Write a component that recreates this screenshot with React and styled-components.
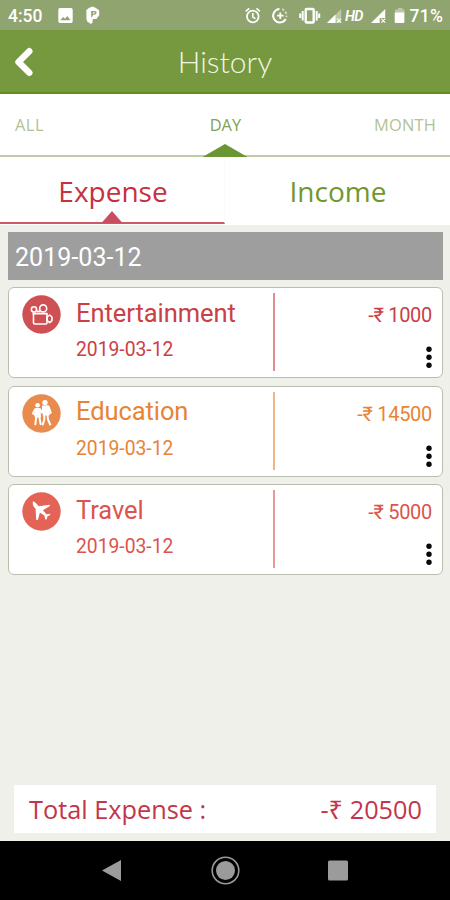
import React from "react";
import styled, { createGlobalStyle } from "styled-components";

const Global = createGlobalStyle`
  * { box-sizing: border-box; }
  body { margin: 0; background: #eff0ea; }
`;

const Screen = styled.div`
  width: 450px;
  height: 900px;
  display: flex;
  flex-direction: column;
  overflow: hidden;
  background: #eff0ea;
  font-family: Roboto, "Noto Sans", sans-serif;
`;

const StatusBar = styled.div`
  height: 30px;
  flex: none;
  display: flex;
  align-items: center;
  justify-content: space-between;
  padding: 2px 7px 0 8px;
  background: #8fa46e;
  color: #fff;
`;

const StatusText = styled.span`
  font-size: 17.5px;
  line-height: 20px;
  font-weight: 500;
  letter-spacing: ${(p) => p.$spacing || "0"};
`;

const StatusGroup = styled.div`
  display: flex;
  align-items: center;
  gap: ${(p) => p.$gap || "0"};
`;

const StatusIcons = styled.svg`
  display: block;
`;

const Header = styled.header`
  height: 64px;
  flex: none;
  display: grid;
  grid-template-columns: 50px 1fr 50px;
  align-items: center;
  background: #76983f;
  border-bottom: 2px solid #628f19;
`;

const BackIcon = styled.svg`
  display: block;
  margin: 1px 0 0 12px;
`;

const Title = styled.h1`
  margin: 0;
  text-align: center;
  color: #f0f6e2;
  font: 300 30px/40px Lato, "Open Sans", sans-serif;
`;

const PeriodTabs = styled.nav`
  height: 63px;
  flex: none;
  display: grid;
  grid-template-columns: 1fr 1fr 1fr;
  background: #fff;
  border-bottom: 2px solid #bfcbab;
`;

const PeriodTab = styled.div`
  position: relative;
  padding: 20px 14px 0 15px;
  text-align: ${(p) => p.$align};
  color: ${(p) => (p.$active ? "#819f55" : "#b2c296")};
  font: 400 16.4px/22px "Open Sans", sans-serif;
  letter-spacing: ${(p) => p.$spacing || "0"};
`;

const Pointer = styled.svg`
  position: absolute;
  left: 50%;
  bottom: ${(p) => p.$bottom};
  transform: translateX(-50%);
`;

const TypeTabs = styled.nav`
  height: 68px;
  flex: none;
  display: grid;
  grid-template-columns: 1fr 1fr;
  background: #fff;
`;

const TypeTab = styled.div`
  position: relative;
  height: 67px;
  padding: 15px 0 0 2px;
  text-align: center;
  color: ${(p) => p.$color};
  border-bottom: 2px solid ${(p) => (p.$active ? "#cf5868" : "transparent")};
  border-right: 1px solid ${(p) => (p.$active ? "#fafaf8" : "transparent")};
  font: 400 28px/38px "Open Sans", sans-serif;
`;

const List = styled.main`
  flex: 1;
  padding: 7px 7px 0 8px;
`;

const DateBar = styled.div`
  height: 48px;
  margin-bottom: 7.3px;
  padding: 2px 7px 0;
  background: #9e9e9e;
  color: #fff;
  font-size: 25px;
  line-height: 48px;
  letter-spacing: 0.05px;
`;

const Card = styled.article`
  height: 91px;
  margin-bottom: 7.4px;
  display: grid;
  grid-template-columns: 67px 197px 2px 1fr;
  background: #fff;
  border: 1px solid #b9bfae;
  border-radius: 6px;
  color: ${(p) => p.$color};
`;

const Badge = styled.svg`
  display: block;
  margin: 7px 0 0 13px;
`;

const Details = styled.div`
  padding-top: 8.5px;
`;

const Category = styled.div`
  font-size: 25.5px;
  line-height: 32px;
  letter-spacing: ${(p) => p.$spacing};
`;

const EntryDate = styled.div`
  margin-top: 8.5px;
  font-size: 19.3px;
  line-height: 26px;
`;

const Divider = styled.div`
  width: 2px;
  height: 78px;
  margin-top: 5px;
  background: currentColor;
  opacity: 0.6;
`;

const AmountSide = styled.div`
  display: flex;
  flex-direction: column;
  align-items: flex-end;
  padding: 14px 10px 0 0;
`;

const Amount = styled.div`
  font-size: 20px;
  line-height: 27px;
  letter-spacing: -0.3px;
`;

const Menu = styled.svg`
  display: block;
  margin-top: 16px;
`;

const Total = styled.footer`
  height: 48px;
  flex: none;
  margin: 0 14px 8px;
  padding: 0 14px 0 15px;
  display: flex;
  justify-content: space-between;
  background: #fff;
  color: #c33549;
  font: 400 25.3px/49px "Open Sans", "Noto Sans", sans-serif;
`;

const NavBar = styled.div`
  height: 59px;
  flex: none;
  background: #000;
  display: flex;
  justify-content: center;
`;

const CameraGlyph = () => (
  <g fill="none" stroke="#fff" strokeWidth="1.6" strokeLinejoin="round">
    <circle cx="12" cy="14.4" r="2.6" />
    <circle cx="21.2" cy="13.4" r="3.5" />
    <path d="M10.500 18.600h14.500v9.200q0 1.200-1.200 1.200H12.700q-1.200 0-1.200-1.200v-9.200M15 16.400h3.500" />
    <path d="M25.200 22l2.500-2 2.300 2v3.600l-2.300 2-2.500-2z" />
  </g>
);

const WalkersGlyph = () => (
  <g fill="#fff" stroke="#fff" strokeLinecap="round" strokeLinejoin="round">
    <circle cx="15.600" cy="11.200" r="2.300" strokeWidth="0" />
    <circle cx="23" cy="8.600" r="2.700" strokeWidth="0" />
    <path d="M13.400 14.500h4.600l.3 8.500h-5z" strokeWidth="1.200" />
    <path d="M20.600 12.200l5.600-.3.600 9h-5.400z" strokeWidth="1.400" />
    <path
      d="M13 15.500l-2 4 2.300 1.400M18 15.500l2 3 1.500-5M26.800 13l1.900 5.500-2 1.500M14.300 22.500l-1 7.800M17.300 22.500l1.300 7.600M22.300 20.500v5l-1.500 5M25.500 20.500l.5 5 2.200 5"
      fill="none"
      strokeWidth="2"
    />
  </g>
);

const PlaneGlyph = () => (
  <path
    fill="#fff"
    d="M11 9.300c1.500.1 3.200 2.300 5.800 5l10.800-1.500c.6.800.2 1.400-.5 1.800l-6.200 3.600 3.500 4.100 3.600-.5c.5.500.4 1-.2 1.400l-2.400 1.200-.8 2.800c-.5.600-1 .6-1.400 0l-.7-3.400-4.600-3.400-1.800 6.800c-.5.800-1.200 1.200-1.900.8l-.6-11.200c-2.300-2.300-3.400-4.200-2.600-7.500z"
  />
);

const entries = [
  { name: "Entertainment", amount: "-₹ 1000", color: "#cb4046", badge: "#cf5053", Glyph: CameraGlyph, spacing: "-0.06px" },
  { name: "Education", amount: "-₹ 14500", color: "#e78435", badge: "#e98b4d", Glyph: WalkersGlyph, spacing: "-0.08px" },
  { name: "Travel", amount: "-₹ 5000", color: "#dc544b", badge: "#e46357", Glyph: PlaneGlyph, spacing: "-0.05px" },
];

function Entry({ name, amount, color, badge, Glyph, spacing }) {
  return (
    <Card $color={color}>
      <Badge width="39" height="39" viewBox="0 0 39 39">
        <circle cx="19.500" cy="19.500" r="19.200" fill={badge} />
        <Glyph />
      </Badge>
      <Details>
        <Category $spacing={spacing}>{name}</Category>
        <EntryDate>2019-03-12</EntryDate>
      </Details>
      <Divider />
      <AmountSide>
        <Amount>{amount}</Amount>
        <Menu width="6" height="24" viewBox="0 0 6 24" fill="#080808">
          <circle cx="3" cy="4.200" r="2.700" />
          <circle cx="3" cy="12.200" r="2.700" />
          <circle cx="3" cy="20.200" r="2.700" />
        </Menu>
      </AmountSide>
    </Card>
  );
}

function StatusLeftIcons() {
  return (
    <StatusIcons width="60" height="26" viewBox="50 3 60 26">
      <path
        fill="#fff"
        fillRule="evenodd"
        d="M60 8h11a1.700 1.700 0 0 1 1.700 1.700v11.600A1.700 1.700 0 0 1 71 23H60a1.700 1.700 0 0 1-1.700-1.700V9.700A1.700 1.700 0 0 1 60 8zm.2 12.200h10.200l-3-4.200-2.300 2.800-1.800-1.800z"
      />
      <path
        fill="#fff"
        fillRule="evenodd"
        d="M92.700 6.600l3.200 1.400 3.200 2.300.2 4.800-2.700 3.700-4 .5v3.200l-1.700 1.500-3.700-2.600-.8-2.400V10l2.800-2.200zM91.200 11v6.500l1.600-1.500v-1.300h1.600c2.900 0 2.900-3.700 0-3.700zm1.700 1.200h1.300c1 0 1 1.400 0 1.400h-1.300z"
      />
    </StatusIcons>
  );
}

function StatusRightIcons() {
  return (
    <StatusIcons width="170" height="26" viewBox="240 3 170 26" fill="none" stroke="#fff">
      <circle cx="252.800" cy="16.500" r="5.800" strokeWidth="1.800" />
      <path d="M252.800 13v4l2.700 1.600M245.700 11.300l3.500-3M259.900 11.300l-3.500-3" strokeWidth="1.600" />
      <path d="M279.500 9a6.700 6.700 0 1 0 6.200 10" strokeWidth="2" />
      <path d="M282 9.200a6.700 6.700 0 0 1 4.300 8" strokeWidth="1.800" strokeDasharray="2.500 1.500" opacity=".6" />
      <path d="M280.300 12.500v6.400M277.100 15.700h6.400" strokeWidth="1.800" />
      <rect x="305.700" y="9" width="8" height="13.500" rx="1" strokeWidth="2.400" />
      <path d="M302.700 11v9.500M316.700 11v9.500M300.200 13.500v4.500M319.200 13.500v4.500" strokeWidth="2" />
      <g stroke="none" fill="#fff">
        <path d="M327 23l14.200-14v14z" opacity=".4" />
        <path d="M327 23l8.500-8.400v8.400z" />
        <path d="M371 23l14.200-14v9h-5.500v5z" />
        <path d="M396.500 9.500h3V8h4.500v1.500h2V23h-9.500z" transform="translate(-1.500 0)" opacity=".4" />
        <path d="M394.700 12.500h9.500V22a1 1 0 0 1-1 1h-7.500a1 1 0 0 1-1-1z" />
        <text x="345" y="21" fontFamily="Roboto" fontSize="14.500" fontWeight="600" fontStyle="italic" letterSpacing="-0.8">HD</text>
      </g>
      <path d="M337 18.700l4 4M341 18.700l-4 4M381.300 18.700l4 4M385.300 18.700l-4 4" strokeWidth="1.100" />
    </StatusIcons>
  );
}

export default function App() {
  return (
    <Screen>
      <Global />
      <StatusBar>
        <StatusGroup $gap="7.5px">
          <StatusText>4:50</StatusText>
          <StatusLeftIcons />
        </StatusGroup>
        <StatusGroup>
          <StatusRightIcons />
          <StatusText $spacing="0.2px">71%</StatusText>
        </StatusGroup>
      </StatusBar>

      <Header>
        <BackIcon width="24" height="32" viewBox="0 0 24 32">
          <path d="M17.300 5.200L6.500 16l10.800 10.800" fill="none" stroke="#fff" strokeWidth="6.400" strokeLinecap="round" strokeLinejoin="round" />
        </BackIcon>
        <Title>History</Title>
      </Header>

      <PeriodTabs>
        <PeriodTab $align="left" $spacing="0.5px">ALL</PeriodTab>
        <PeriodTab $align="center" $spacing="0.1px" $active>
          DAY
          <Pointer $bottom="-2px" width="45" height="13" viewBox="0 0 45 13">
            <path d="M0 13L22.500 0 45 13z" fill="#6a9633" />
          </Pointer>
        </PeriodTab>
        <PeriodTab $align="right" $spacing="0.2px">MONTH</PeriodTab>
      </PeriodTabs>

      <TypeTabs>
        <TypeTab $color="#c9303f" $active>
          Expense
          <Pointer $bottom="-1px" width="21" height="12" viewBox="0 0 21 12">
            <path d="M0 12L10.500 0 21 12z" fill="#cb4d60" />
          </Pointer>
        </TypeTab>
        <TypeTab $color="#70972f">Income</TypeTab>
      </TypeTabs>

      <List>
        <DateBar>2019-03-12</DateBar>
        {entries.map((entry) => (
          <Entry key={entry.name} {...entry} />
        ))}
      </List>

      <Total>
        <span>Total Expense :</span>
        <span>-₹ 20500</span>
      </Total>

      <NavBar>
        <svg width="450" height="59" viewBox="0 841 450 59">
          <path d="M102 870.500l19-10.500v21z" fill="#9b9b9b" />
          <circle cx="225.500" cy="870.500" r="13.300" fill="none" stroke="#999" strokeWidth="1.600" />
          <circle cx="225.500" cy="870.500" r="9.500" fill="#9b9b9b" />
          <rect x="328" y="860.500" width="20" height="20" rx="1.500" fill="#9b9b9b" />
        </svg>
      </NavBar>
    </Screen>
  );
}
